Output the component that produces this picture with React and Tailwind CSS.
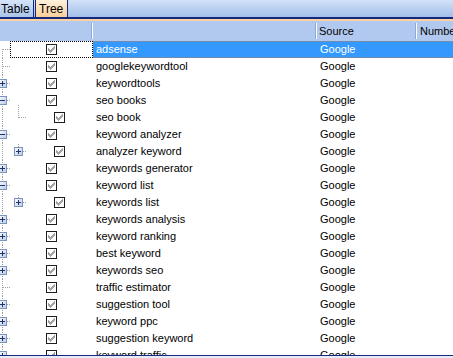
import React from "react";

const rows = [
  { label: "adsense", level: 1, btn: null, first: true, selected: true },
  { label: "googlekeywordtool", level: 1, btn: null },
  { label: "keywordtools", level: 1, btn: "+" },
  { label: "seo books", level: 1, btn: "-" },
  { label: "seo book", level: 2, btn: null },
  { label: "keyword analyzer", level: 1, btn: "-" },
  { label: "analyzer keyword", level: 2, btn: "+" },
  { label: "keywords generator", level: 1, btn: "+" },
  { label: "keyword list", level: 1, btn: "-" },
  { label: "keywords list", level: 2, btn: "+" },
  { label: "keywords analysis", level: 1, btn: "+" },
  { label: "keyword ranking", level: 1, btn: "+" },
  { label: "best keyword", level: 1, btn: "+" },
  { label: "keywords seo", level: 1, btn: "+" },
  { label: "traffic estimator", level: 1, btn: null },
  { label: "suggestion tool", level: 1, btn: "+" },
  { label: "keyword ppc", level: 1, btn: "+" },
  { label: "suggestion keyword", level: 1, btn: "+" },
  { label: "keyword traffic", level: 1, btn: "+" },
];

const DOT = { stroke: "#a0a0a0", strokeWidth: 1, strokeDasharray: "1 1", shapeRendering: "crispEdges" };

function ExpBtn({ cx, sign }) {
  const x = cx - 3.5;
  return (
    <g shapeRendering="crispEdges">
      <rect x={x} y={4.5} width={8} height={8} rx={1} fill="url(#btnGrad)" stroke="#7b93bd" />
      <line x1={cx - 2} y1={8.5} x2={cx + 3} y2={8.5} stroke="#1d3473" />
      {sign === "+" && <line x1={cx + 0.5} y1={6} x2={cx + 0.5} y2={11} stroke="#1d3473" />}
    </g>
  );
}

function TreeLines({ level, btn, first }) {
  return (
    <svg className="absolute left-0 top-0 overflow-visible" width="40" height="17" viewBox="0 0 40 17">
      <defs>
        <linearGradient id="btnGrad" x1="0" y1="0" x2="1" y2="1">
          <stop offset="0" stopColor="#ffffff" />
          <stop offset="1" stopColor="#b7c8e6" />
        </linearGradient>
      </defs>
      <line x1={2.5} y1={first ? 8 : 0} x2={2.5} y2={17} style={DOT} />
      {level === 1 && (
        <line x1={btn ? 7 : 3} y1={8.5} x2={10} y2={8.5} style={DOT} />
      )}
      {level === 2 && !btn && (
        <>
          <line x1={18.5} y1={-4} x2={18.5} y2={9} style={DOT} />
          <line x1={19} y1={8.5} x2={27} y2={8.5} style={DOT} />
        </>
      )}
      {level === 2 && btn && (
        <>
          <line x1={18.5} y1={1} x2={18.5} y2={4} style={DOT} />
          <line x1={23} y1={8.5} x2={27} y2={8.5} style={DOT} />
        </>
      )}
      {level === 1 && btn && <ExpBtn cx={2} sign={btn} />}
      {level === 2 && btn && <ExpBtn cx={18} sign={btn} />}
    </svg>
  );
}

function Check() {
  return (
    <div className="w-[11px] h-[11px] border border-[#1e1e1e] bg-white shrink-0 relative">
      <svg className="absolute left-0 top-0" width="9" height="9" viewBox="0 0 9 9">
        <path
          d="M1 3h1v1h1v1h1v-1h1v-1h1v-1h1v-1h1v3h-1v1h-1v1h-1v1h-1v1h-1v-1h-1v-1h-1z"
          fill="#a3a3a3"
          shapeRendering="crispEdges"
        />
      </svg>
    </div>
  );
}

function Row({ label, level, btn, first, selected }) {
  return (
    <div className="flex h-[17px] shrink-0">
      <div
        className={`relative w-[93px] h-full shrink-0 flex items-center ${
          level === 2 ? "pl-[54px]" : "pl-[46px]"
        } bg-white`}
      >
        <TreeLines level={level} btn={btn} first={first} />
        {selected && (
          <div className="absolute left-[10px] right-0 top-0 h-[17px] border border-dotted border-black" />
        )}
        <Check />
      </div>
      <div
        className={`flex-1 flex items-center h-full ${
          selected ? "bg-[#3399ff] text-white border-y border-dotted border-[#b08060]" : "text-black"
        }`}
      >
        <div className="w-[224px] pl-[3px] whitespace-nowrap shrink-0">{label}</div>
        <div className="w-[100px] pl-[3px] whitespace-nowrap shrink-0">Google</div>
      </div>
    </div>
  );
}

function HeaderDivider() {
  return (
    <div className="flex h-[16px] shrink-0">
      <div className="w-[1px] bg-[#8ea9d8]" />
      <div className="w-[1px] bg-white" />
    </div>
  );
}

export default function App() {
  return (
    <div
      className="w-[453px] h-[358px] overflow-hidden bg-white flex flex-col text-[11px] leading-none"
      style={{ fontFamily: '"Liberation Sans", Arial, sans-serif' }}
    >
      {/* tab strip */}
      <div className="h-[17px] flex shrink-0 text-[12px] bg-gradient-to-b from-[#d3e2f8] to-[#a3bfe9]">
        <div className="w-[34px] flex items-center pl-[1px] border-r border-[#14287d] bg-gradient-to-b from-[#d6e4f8] to-[#a9c4ea]">
          Table
        </div>
        <div className="w-[1px]" />
        <div className="w-[33px] flex items-center pl-[3px] border-r border-l border-[#14287d] bg-gradient-to-b from-[#fff0dc] to-[#f9cf98]">
          Tree
        </div>
      </div>
      <div className="h-[2px] bg-[#14287d] shrink-0" />
      <div className="h-[2px] bg-[#fbd3a2] shrink-0" />
      {/* header */}
      <div className="h-[20px] bg-[#b2c9ef] flex items-center shrink-0">
        <div className="w-[91px] shrink-0" />
        <HeaderDivider />
        <div className="w-[222px] shrink-0" />
        <HeaderDivider />
        <div className="w-[98px] shrink-0 pl-[2px]">Source</div>
        <HeaderDivider />
        <div className="pl-[3px] whitespace-nowrap">Number</div>
      </div>
      {/* rows */}
      <div className="h-[314px] overflow-hidden flex flex-col shrink-0">
        {rows.map((r, i) => (
          <Row key={i} {...r} />
        ))}
      </div>
      <div className="h-[1px] bg-[#14287d] shrink-0" />
      <div className="flex-1 bg-[#e4ecf7]" />
    </div>
  );
}
